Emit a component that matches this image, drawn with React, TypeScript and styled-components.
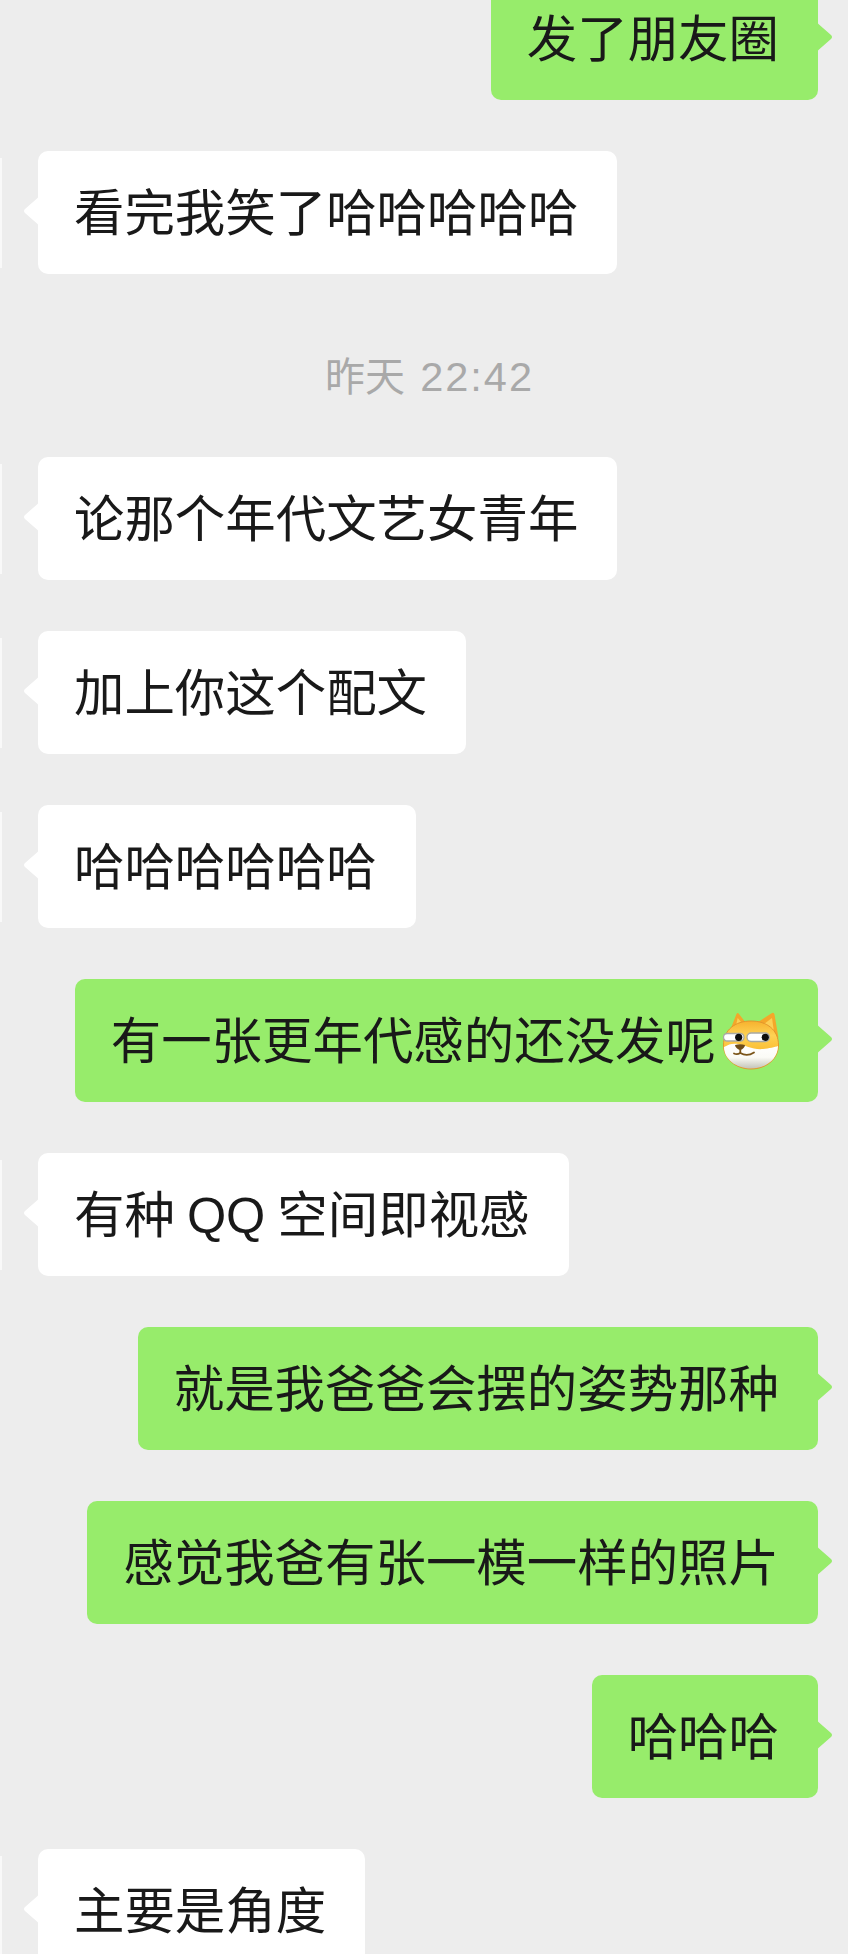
import styled, { createGlobalStyle } from 'styled-components'

const GlobalStyle = createGlobalStyle`
  html, body {
    margin: 0;
    padding: 0;
    background: #ededed;
  }
`

type Message =
  | { kind: 'time'; day: string; clock: string }
  | { kind: 'in' | 'out'; text: string; doge?: boolean }

const messages: Message[] = [
  { kind: 'out', text: '发了朋友圈' },
  { kind: 'in', text: '看完我笑了哈哈哈哈哈' },
  { kind: 'time', day: '昨天', clock: '22:42' },
  { kind: 'in', text: '论那个年代文艺女青年' },
  { kind: 'in', text: '加上你这个配文' },
  { kind: 'in', text: '哈哈哈哈哈哈' },
  { kind: 'out', text: '有一张更年代感的还没发呢', doge: true },
  { kind: 'in', text: '有种 QQ 空间即视感' },
  { kind: 'out', text: '就是我爸爸会摆的姿势那种' },
  { kind: 'out', text: '感觉我爸有张一模一样的照片' },
  { kind: 'out', text: '哈哈哈' },
  { kind: 'in', text: '主要是角度' },
]

const Tail = ({ side, color }: { side: 'left' | 'right'; color: string }) => (
  <TailIcon $side={side} width="17" height="34" viewBox="0 0 17 34">
    <path
      fill={color}
      d={
        side === 'left'
          ? 'M17 0 C16 2 15.5 3 14 4.5 L2 15 Q0 17 2 19 L14 29.5 C15.5 31 16 32 17 34 Z'
          : 'M0 0 C1 2 1.5 3 3 4.5 L15 15 Q17 17 15 19 L3 29.5 C1.5 31 1 32 0 34 Z'
      }
    />
  </TailIcon>
)

const Doge = () => (
  <DogeIcon viewBox="0 0 56 58">
    <defs>
      <linearGradient id="fur" x1="0" y1="0" x2="0" y2="1">
        <stop offset="0" stopColor="#f7b12e" />
        <stop offset="0.3" stopColor="#fdd254" />
        <stop offset="0.7" stopColor="#fbb92c" />
        <stop offset="1" stopColor="#ee9a22" />
      </linearGradient>
      <linearGradient id="chin" x1="0" y1="0" x2="0" y2="1">
        <stop offset="0" stopColor="#ffffff" />
        <stop offset="0.55" stopColor="#fbfbf6" />
        <stop offset="1" stopColor="#c4c4b8" />
      </linearGradient>
    </defs>
    <path d="M8 16 L13.5 2 Q14.7 0 16 2 L23 11 Z" fill="#f4a72a" />
    <path d="M35 10 L49 1 Q51 0 51.5 2.5 L55.5 26 Z" fill="#f4a72a" />
    <path d="M13 13 L14.7 6 L19 11 Z" fill="#fccf55" />
    <path d="M41 12 L49 6 L51 20 Z" fill="#fccf55" />
    <path
      d="M0.5 33 C0.5 18 12 9 28 9 C44 9 55.5 18 55.5 33 C55.5 47 43 57 28 57 C13 57 0.5 47 0.5 33 Z"
      fill="url(#fur)"
      stroke="#e3962c"
      strokeWidth="1"
    />
    <path
      d="M1 35 C6 32 10 31 15 32 C22 33 30 38 40 37 C46 36.5 52 35 55 34 C55 47 43 56.5 28 56.5 C13 56.5 1 47 1 35 Z"
      fill="url(#chin)"
    />
    <rect x="0.5" y="21.5" width="20.5" height="7.5" rx="3.7" fill="#fff" stroke="#a8a8a4" strokeWidth="1.3" />
    <rect x="24" y="21" width="22.5" height="8.5" rx="4.2" fill="#fff" stroke="#a8a8a4" strokeWidth="1.3" />
    <circle cx="15.7" cy="25.3" r="3.6" fill="#0d0d0d" />
    <circle cx="42.3" cy="25.3" r="3.6" fill="#0d0d0d" />
    <path d="M12 33 Q17 31.5 22 33 Q21.5 36.5 17.3 38.3 Q12.5 36.5 12 33 Z" fill="#6e4c18" />
    <path d="M17.3 38 L17.3 41 Q24 45 31 40.5" fill="none" stroke="#7a5418" strokeWidth="1.8" strokeLinecap="round" />
    <path d="M17.3 41 Q14 43 11 41.5" fill="none" stroke="#7a5418" strokeWidth="1.8" strokeLinecap="round" />
  </DogeIcon>
)

const App = () => {
  return (
    <Page>
      <GlobalStyle />
      <Chat>
        {messages.map((m, i) => {
          if (m.kind === 'time') {
            return (
              <TimeLabel key={i}>
                {m.day} <TimeDigits>{m.clock}</TimeDigits>
              </TimeLabel>
            )
          }
          if (m.kind === 'in') {
            return (
              <IncomingRow key={i}>
                <AvatarEdge />
                <Bubble $color="#ffffff">
                  <Tail side="left" color="#ffffff" />
                  {m.text}
                </Bubble>
              </IncomingRow>
            )
          }
          return (
            <OutgoingRow key={i}>
              <Bubble $color="#97ec6b">
                {m.text}
                {m.doge && <Doge />}
                <Tail side="right" color="#97ec6b" />
              </Bubble>
            </OutgoingRow>
          )
        })}
      </Chat>
    </Page>
  )
}

export default App

const Page = styled.div`
  width: 848px;
  height: 1954px;
  overflow: hidden;
  background: #ededed;
  font-family: 'Liberation Sans', 'Noto Sans CJK SC', sans-serif;
`

const Chat = styled.div`
  display: flex;
  flex-direction: column;
  gap: 51px;
  margin-top: -23px;
`

const IncomingRow = styled.div`
  display: flex;
  align-items: center;
  gap: 36px;
`

const OutgoingRow = styled.div`
  display: flex;
  justify-content: flex-end;
  padding-right: 30px;
`

const AvatarEdge = styled.div`
  width: 2px;
  height: 110px;
  background: #f9f9f9;
`

const Bubble = styled.div<{ $color: string }>`
  position: relative;
  box-sizing: border-box;
  display: flex;
  align-items: center;
  height: 123px;
  padding: 0 39px 7px 36px;
  border-radius: 10px;
  background: ${(p) => p.$color};
  color: #191919;
  font-size: 50.45px;
  word-spacing: -2px;
  white-space: pre;
`

const TailIcon = styled.svg<{ $side: 'left' | 'right' }>`
  position: absolute;
  top: 43px;
  ${(p) => (p.$side === 'left' ? 'left: -15px;' : 'right: -15px;')}
`

const DogeIcon = styled.svg`
  width: 56px;
  height: 58px;
  margin: 7px 0 0 7px;
  flex: none;
`

const TimeLabel = styled.div`
  height: 58px;
  padding: 23px 0 0 11px;
  text-align: center;
  color: #a9a9a9;
  font-size: 40px;
  line-height: 57px;
`

const TimeDigits = styled.span`
  margin-left: 4px;
  font-size: 41.5px;
  letter-spacing: 2px;
`
